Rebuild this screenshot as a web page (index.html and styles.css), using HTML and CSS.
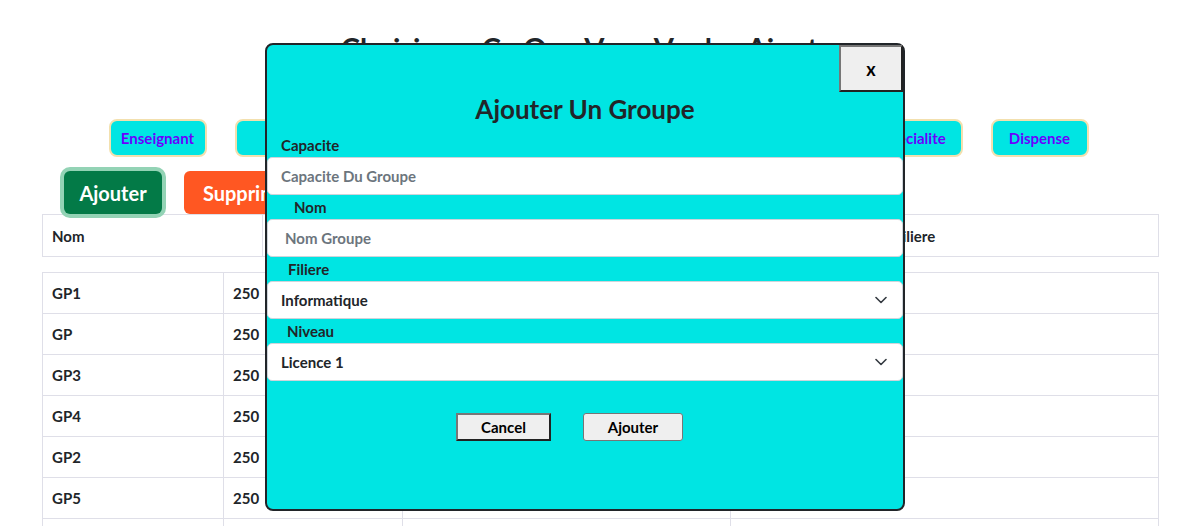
FILE: index.html
```html
<!DOCTYPE html>
<html lang="fr">
<head>
<meta charset="utf-8">
<title>Groupes</title>
<link rel="stylesheet" href="styles.css">
</head>
<body>
<h1 class="title">Choisissez Ce Que Vous Voulez Ajouter</h1>
<nav class="nav">
  <button class="nav-btn">Enseignant</button>
  <button class="nav-btn">Salle</button>
  <button class="nav-btn">Filiere</button>
  <button class="nav-btn">Niveau</button>
  <button class="nav-btn">Groupe</button>
  <button class="nav-btn">Module</button>
  <button class="nav-btn">Specialite</button>
  <button class="nav-btn">Dispense</button>
</nav>
<div class="actions">
  <button class="btn-add">Ajouter</button>
  <button class="btn-del">Supprimer</button>
</div>
<table class="head-table">
  <tr>
    <th class="h-nom">Nom</th>
    <th class="h-cap">Capacite</th>
    <th class="h-niv">Niveau</th>
    <th class="h-fil">Filiere</th>
  </tr>
</table>
<table class="body-table">
  <tr><td class="c1">GP1</td><td class="c2">250</td><td class="c3"></td><td class="c4"></td></tr>
  <tr><td class="c1">GP</td><td class="c2">250</td><td class="c3"></td><td class="c4"></td></tr>
  <tr><td class="c1">GP3</td><td class="c2">250</td><td class="c3"></td><td class="c4"></td></tr>
  <tr><td class="c1">GP4</td><td class="c2">250</td><td class="c3"></td><td class="c4"></td></tr>
  <tr><td class="c1">GP2</td><td class="c2">250</td><td class="c3"></td><td class="c4"></td></tr>
  <tr><td class="c1">GP5</td><td class="c2">250</td><td class="c3"></td><td class="c4"></td></tr>
  <tr><td class="c1"></td><td class="c2"></td><td class="c3"></td><td class="c4"></td></tr>
</table>

<div class="modal">
  <div class="modal-head">
    <button class="close-btn">x</button>
  </div>
  <h2 class="modal-title">Ajouter Un Groupe</h2>
  <label class="lbl lbl-cap">Capacite</label>
  <input class="field field-cap" type="text" placeholder="Capacite Du Groupe">
  <label class="lbl lbl-nom">Nom</label>
  <input class="field field-nom" type="text" placeholder="Nom Groupe">
  <label class="lbl lbl-fil">Filiere</label>
  <div class="select">
    <span>Informatique</span>
    <svg class="chev" width="12" height="8" viewBox="0 0 12 8"><path d="M1 1.5 L6 6.5 L11 1.5" fill="none" stroke="#343a40" stroke-width="1.6" stroke-linecap="round" stroke-linejoin="round"/></svg>
  </div>
  <label class="lbl lbl-niv">Niveau</label>
  <div class="select">
    <span>Licence 1</span>
    <svg class="chev" width="12" height="8" viewBox="0 0 12 8"><path d="M1 1.5 L6 6.5 L11 1.5" fill="none" stroke="#343a40" stroke-width="1.6" stroke-linecap="round" stroke-linejoin="round"/></svg>
  </div>
  <div class="modal-foot">
    <button class="foot-btn btn-cancel">Cancel</button>
    <button class="foot-btn btn-ok">Ajouter</button>
  </div>
</div>
</body>
</html>
```
FILE: styles.css
```css
* { box-sizing: border-box; }
body {
  margin: 0;
  font-family: Lato, "Open Sans", sans-serif;
  color: #212529;
  background: #fff;
  position: relative;
}
button { font-family: inherit; cursor: pointer; }

.title {
  margin: 0;
  padding-top: 28px;
  text-align: center;
  font-size: 29px;
  line-height: 40px;
  font-weight: 700;
  color: #212529;
}

.nav {
  display: flex;
  justify-content: center;
  gap: 28px;
  margin-top: 51px;
  padding-left: 12px;
}
.nav-btn {
  width: 98px;
  height: 38px;
  background: #00e5e3;
  border: 2px solid #f3e0ae;
  border-radius: 8px;
  color: #6a00ff;
  font-size: 15px;
  font-weight: 700;
  padding: 0;
}

.actions {
  display: flex;
  gap: 22px;
  padding-left: 64px;
  margin-top: 14px;
}
.btn-add {
  position: relative;
  z-index: 1;
  width: 98px;
  height: 43px;
  background: #037a47;
  color: #fff;
  border: none;
  border-radius: 6px;
  box-shadow: 0 0 0 4px #93d3b5;
  font-size: 20px;
  font-weight: 700;
}
.btn-del {
  width: 130px;
  height: 43px;
  background: #ff5722;
  color: #fff;
  border: none;
  border-radius: 6px;
  font-size: 20px;
  font-weight: 700;
}

.head-table, .body-table {
  border-collapse: collapse;
  margin-left: 42px;
  width: 1116px;
  table-layout: fixed;
}
.head-table th {
  height: 42px;
  border: 1px solid #dfdfe8;
  text-align: left;
  padding: 0 9px;
  font-size: 15px;
  font-weight: 700;
}
.h-nom { width: 220px; }
.h-cap { width: 300px; }
.h-niv { width: 322px; }
.h-fil { width: 274px; }

.body-table { margin-top: 15px; }
.body-table td {
  height: 41px;
  border: 1px solid #dfdfe8;
  padding: 0 9px;
  font-size: 15px;
  font-weight: 700;
}
.c1 { width: 181px; }
.c2 { width: 179px; }
.c3 { width: 328px; }
.c4 { width: 428px; }

.modal {
  position: absolute;
  left: 265px;
  top: 43px;
  width: 640px;
  height: 468px;
  border: 2px solid #212529;
  border-radius: 8px;
  background: #00e5e3;
}
.modal-head {
  display: flex;
  justify-content: flex-end;
}
.close-btn {
  width: 64px;
  height: 47px;
  background: #efefef;
  border: 2px solid;
  border-color: #777 #222 #222 #777;
  font-size: 18px;
  font-weight: 700;
  color: #000;
  padding: 0;
}
.modal-title {
  margin: 0 0 7px;
  text-align: center;
  font-size: 26px;
  line-height: 34px;
  font-weight: 700;
  color: #212529;
}
.lbl {
  display: block;
  height: 24px;
  line-height: 24px;
  font-size: 15px;
  font-weight: 700;
  color: #212529;
}
.lbl-cap { padding-left: 14px; }
.lbl-nom { padding-left: 27px; }
.lbl-fil { padding-left: 21px; }
.lbl-niv { padding-left: 20px; }

.field {
  display: block;
  width: 100%;
  height: 38px;
  border: 1px solid #ced4da;
  border-radius: 5px;
  background: #fff;
  padding: 0 13px;
  font-family: inherit;
  font-size: 15px;
  font-weight: 700;
  color: #212529;
  outline: none;
}
.field::placeholder { color: #6c757d; }
.field-nom { padding-left: 17px; }

.select {
  display: flex;
  align-items: center;
  justify-content: space-between;
  height: 38px;
  background: #fff;
  border: 1px solid #ced4da;
  border-radius: 5px;
  padding: 0 15px 0 13px;
  font-size: 15px;
  font-weight: 700;
  color: #212529;
}

.modal-foot {
  display: flex;
  justify-content: center;
  gap: 32px;
  margin-top: 32px;
  padding-right: 31px;
}
.foot-btn {
  height: 28px;
  background: #efefef;
  font-size: 15px;
  font-weight: 700;
  color: #000;
  padding: 0;
}
.btn-cancel {
  width: 95px;
  border: 2px solid;
  border-color: #777 #222 #222 #777;
}
.btn-ok {
  width: 100px;
  border: 1px solid #767676;
  border-radius: 3px;
}
```
